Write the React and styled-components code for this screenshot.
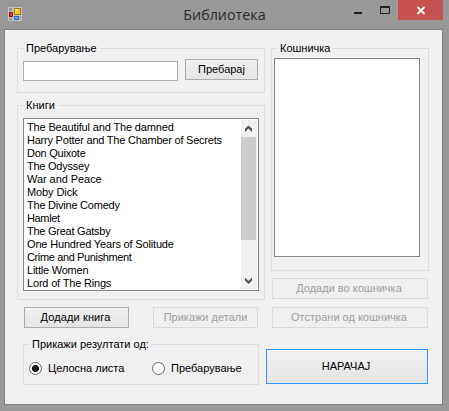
import React, { useState } from "react";
import styled, { createGlobalStyle } from "styled-components";

const GlobalStyle = createGlobalStyle`
  * { box-sizing: border-box; }
  body { margin: 0; overflow: hidden; }
`;

const Window = styled.div`
  width: 449px;
  height: 411px;
  padding: 0 6px 6px 4px;
  background: #989898;
  color: #000;
  font: 11px/13px "Liberation Sans", Arial, sans-serif;
  display: flex;
  flex-direction: column;
`;

const TitleBar = styled.header`
  height: 29px;
  display: grid;
  grid-template-columns: 92px 1fr 90px;
  align-items: start;
`;

const AppIcon = styled.svg`
  display: block;
  margin: 7px 0 0 4px;
`;

const Title = styled.h1`
  margin: 5px 0 0;
  text-align: center;
  font: 14.3px/20px "Open Sans", "Noto Sans", sans-serif;
  color: #2b2b2b;
`;

const Controls = styled.div`
  display: grid;
  grid-template-columns: 1fr 26px 45px;
  width: 96px;
  height: 20px;
  justify-self: end;
`;

const ControlButton = styled.button`
  border: 0;
  padding: 0;
  margin: 0;
  height: 20px;
  background: ${(p) => (p.$close ? "#c75050" : "transparent")};
`;

const ControlGlyph = styled.svg`
  display: block;
`;

const Client = styled.main`
  flex: 1;
  border: 1px solid #808080;
  background: #f0f0f0;
  padding: 18px 13px 0 12px;
`;

const Columns = styled.div`
  display: flex;
  gap: 6px;
`;

const Column = styled.div`
  width: ${(p) => p.$width}px;
`;

const Group = styled.section`
  width: ${(p) => p.$width}px;
  height: ${(p) => p.$height}px;
  margin-bottom: ${(p) => p.$after || 0}px;
  border: 1px solid #dcdcdc;
`;

const Legend = styled.h2`
  width: fit-content;
  height: 13px;
  margin: -7px 0 0 6px;
  padding: 0 3px 0 2px;
  background: #f0f0f0;
  font: inherit;
  white-space: nowrap;
`;

const SearchRow = styled.div`
  display: flex;
  gap: 7px;
  margin: 4px 0 0 5px;
`;

const TextInput = styled.input`
  width: 155px;
  height: 20px;
  margin-top: 2px;
  padding: 0 3px;
  border: 1px solid #abadb3;
  background: #fff;
  font: inherit;
  outline: none;
`;

const Button = styled.button`
  width: ${(p) => p.$width}px;
  height: ${(p) => p.$height || 21}px;
  padding: 0 ${(p) => p.$trim || 0}px 0 0;
  border: 1px solid ${(p) => (p.$primary ? "#3399ff" : "#acacac")};
  background: linear-gradient(#f0f0f0, #e5e5e5);
  color: #000;
  font: inherit;
  letter-spacing: ${(p) => p.$tracking || 0}px;
  white-space: nowrap;

  &:disabled {
    border-color: #d9d9d9;
    background: #efefef;
    color: #a0a0a0;
  }
`;

const ListBox = styled.div`
  display: flex;
  width: ${(p) => p.$width}px;
  height: ${(p) => p.$height}px;
  margin: ${(p) => p.$margin};
  padding: 1px;
  border: 1px solid #828790;
  background: #fff;
`;

const Items = styled.ul`
  flex: 1;
  margin: 1px 0 0;
  padding: 0 0 0 2px;
  list-style: none;
`;

const Item = styled.li`
  height: 13px;
  white-space: nowrap;
  letter-spacing: ${(p) => p.$tracking}px;
`;

const ScrollBar = styled.div`
  width: 16px;
  height: 169px;
  background: #f0f0f0;
`;

const ScrollArrow = styled.svg`
  display: block;
`;

const Thumb = styled.div`
  width: 15px;
  height: 103px;
  margin-bottom: 32px;
  background: #cdcdcd;
`;

const ButtonRow = styled.div`
  display: flex;
  gap: 24px;
  margin-left: 7px;
`;

const ButtonStack = styled.div`
  display: grid;
  gap: 8px;
  margin-left: 1px;
`;

const Footer = styled.div`
  display: flex;
  gap: 7px;
  align-items: flex-start;
  margin: 16px 0 0 6px;
`;

const OrderSlot = styled.div`
  padding-top: 5px;
`;

const RadioRow = styled.div`
  display: grid;
  grid-template-columns: 123px 1fr;
  margin: 11px 0 0 5px;
`;

const RadioLabel = styled.label`
  display: flex;
  align-items: center;
  gap: 6px;
  height: 13px;
  white-space: nowrap;
`;

const Radio = styled.input`
  appearance: none;
  width: 13px;
  height: 13px;
  margin: 0;
  border: 1px solid #666;
  border-radius: 50%;
  background: #fff;

  &:checked {
    background: radial-gradient(circle, #1c1c1c 0 3.2px, #fff 3.9px);
  }
`;

const BOOKS = [
  ["The Beautiful and The damned", -0.15],
  ["Harry Potter and The Chamber of Secrets", -0.22],
  ["Don Quixote", -0.24],
  ["The Odyssey", -0.24],
  ["War and Peace", -0.06],
  ["Moby Dick", -0.1],
  ["The Divine Comedy", -0.23],
  ["Hamlet", -0.36],
  ["The Great Gatsby", -0.25],
  ["One Hundred Years of Solitude", -0.17],
  ["Crime and Punishment", -0.37],
  ["Little Women", -0.22],
  ["Lord of The Rings", -0.18],
];

function FormIcon() {
  return (
    <AppIcon width="14" height="14" viewBox="0 0 14 14" shapeRendering="crispEdges">
      <path fill="#c4c4c4" d="M0 0h14v14H0z" />
      <path fill="#929292" d="M1 1h3v3H1zM1 11h3v2H1zM12 9h1v4h-1z" />
      <path fill="#8f1414" d="M1 5h4v5H1z" />
      <path fill="#d9403a" d="M2 6h2v3H2z" />
      <path fill="#a87500" d="M6 1h7v7H6z" />
      <path fill="#f6c52c" d="M7 2h5v5H7z" />
      <path fill="#ffe57a" d="M7 2h3v2H7z" />
      <path fill="#3464c8" d="M6 9h5v4H6z" />
      <path fill="#75a4f4" d="M7 10h3v2H7z" />
    </AppIcon>
  );
}

function Arrow({ down }) {
  return (
    <ScrollArrow width="16" height="17" viewBox="0 0 16 17">
      <path
        d={down ? "M4 5.5L7.5 8.9L11 5.5V8.6L7.5 12L4 8.6Z" : "M4 11.9L7.5 8.5L11 11.9V8.8L7.5 5.4L4 8.8Z"}
        fill="#505050"
      />
    </ScrollArrow>
  );
}

export default function App() {
  const [mode, setMode] = useState("all");
  return (
    <Window>
      <GlobalStyle />
      <TitleBar>
        <FormIcon />
        <Title>Библиотека</Title>
        <Controls>
          <ControlButton aria-label="Minimize">
            <ControlGlyph width="25" height="20">
              <path d="M7 12h8v2H7z" fill="#222" />
            </ControlGlyph>
          </ControlButton>
          <ControlButton aria-label="Maximize">
            <ControlGlyph width="26" height="20" shapeRendering="crispEdges">
              <path fillRule="evenodd" d="M8 6h10v8H8zM9 8v5h8V8z" fill="#222" />
            </ControlGlyph>
          </ControlButton>
          <ControlButton $close aria-label="Close">
            <ControlGlyph width="45" height="20">
              <path d="M19.5 7L26.5 14M26.5 7L19.5 14" stroke="#fff" strokeWidth="1.8" />
            </ControlGlyph>
          </ControlButton>
        </Controls>
      </TitleBar>
      <Client>
        <Columns>
          <Column $width={248}>
            <Group $width={248} $height={45} $after={12}>
              <Legend>Пребарување</Legend>
              <SearchRow>
                <TextInput />
                <Button $width={73}>Пребарај</Button>
              </SearchRow>
            </Group>
            <Group $width={248} $height={195} $after={7}>
              <Legend>Книги</Legend>
              <ListBox $width={236} $height={173} $margin="6px 0 0 5px">
                <Items>
                  {BOOKS.map(([title, tracking]) => (
                    <Item key={title} $tracking={tracking}>
                      {title}
                    </Item>
                  ))}
                </Items>
                <ScrollBar>
                  <Arrow />
                  <Thumb />
                  <Arrow down />
                </ScrollBar>
              </ListBox>
            </Group>
            <ButtonRow>
              <Button $width={105} $trim={2} $tracking={0.12}>
                Додади книга
              </Button>
              <Button $width={105} disabled>
                Прикажи детали
              </Button>
            </ButtonRow>
          </Column>
          <Column $width={158}>
            <Group $width={158} $height={223} $after={7}>
              <Legend>Кошничка</Legend>
              <ListBox $width={146} $height={199} $margin="3px 0 0 2px" />
            </Group>
            <ButtonStack>
              <Button $width={156} $trim={2} disabled>
                Додади во кошничка
              </Button>
              <Button $width={156} $trim={2} disabled>
                Отстрани од кошничка
              </Button>
            </ButtonStack>
          </Column>
        </Columns>
        <Footer>
          <Group $width={236} $height={41}>
            <Legend>Прикажи резултати од:</Legend>
            <RadioRow>
              <RadioLabel>
                <Radio type="radio" name="mode" checked={mode === "all"} onChange={() => setMode("all")} />
                Целосна листа
              </RadioLabel>
              <RadioLabel>
                <Radio type="radio" name="mode" checked={mode === "search"} onChange={() => setMode("search")} />
                Пребарување
              </RadioLabel>
            </RadioRow>
          </Group>
          <OrderSlot>
            <Button $width={162} $height={35} $trim={2} $primary>
              НАРАЧАЈ
            </Button>
          </OrderSlot>
        </Footer>
      </Client>
    </Window>
  );
}
